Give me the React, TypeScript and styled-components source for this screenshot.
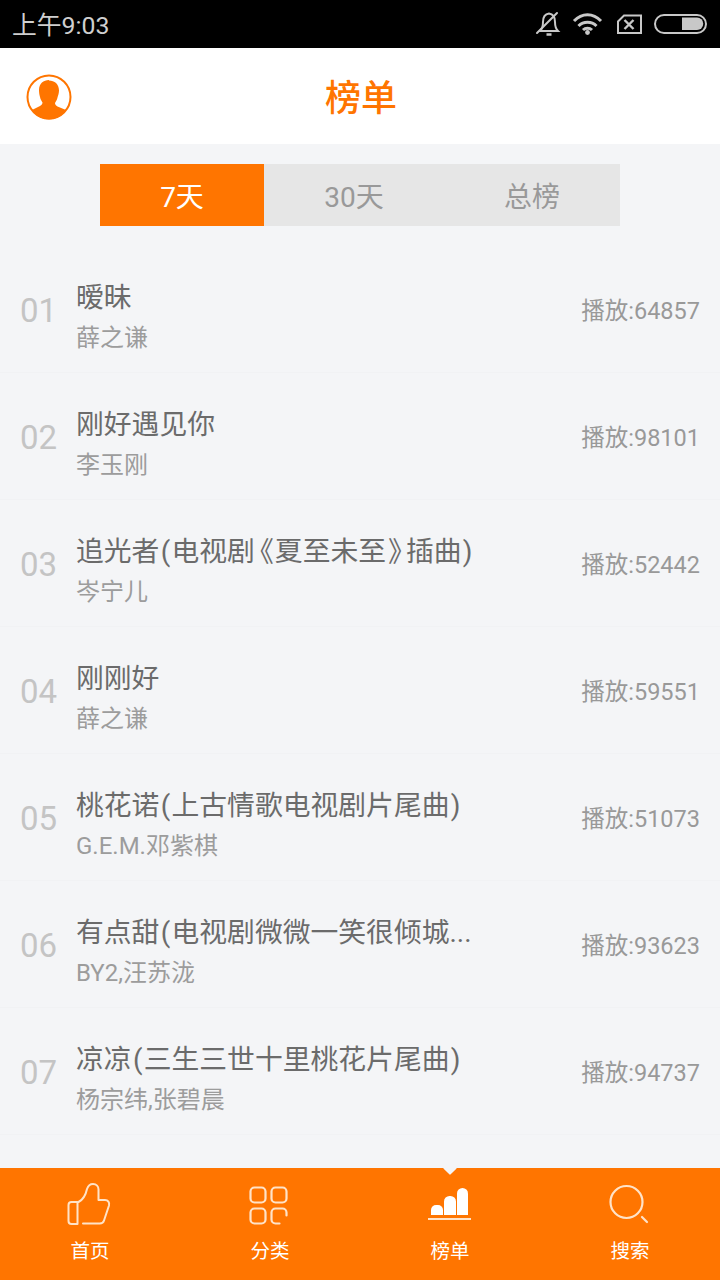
import React from "react";
import styled, { createGlobalStyle } from "styled-components";

const Global = createGlobalStyle`
  html, body { margin: 0; padding: 0; background: #f4f5f7; }
  body { font-family: Roboto, "Noto Sans CJK SC", sans-serif; }
  * { box-sizing: border-box; }
`;

const Screen = styled.div`
  width: 720px; height: 1280px; display: flex; flex-direction: column;
  background: #f4f5f7; overflow: hidden;
`;
const StatusBar = styled.div`
  height: 48px; background: #000; display: flex; align-items: center;
  justify-content: space-between; padding: 0 12px; flex: none;
`;
const Clock = styled.span`
  font-size: 24.8px; color: #cfcfcf; line-height: 48px; font-weight: 400; margin-top: 4px;
`;
const StatusIcons = styled.div`
  display: flex; align-items: center; height: 48px;
`;
const Header = styled.header`
  height: 96px; background: #fff; flex: none; display: flex; align-items: center;
  justify-content: center; position: relative;
`;
const Title = styled.h1`
  margin: 5px 0 0 2px; font-size: 36px; font-weight: 500; color: #ff7500; line-height: 48px;
`;
const Avatar = styled.div`
  position: absolute; left: 26px; top: 26px; width: 46px; height: 46px; display: flex;
`;
const Tabs = styled.div`
  margin: 20px 0 0 100px; width: 520px; height: 62px; display: flex; background: #e6e6e6; flex: none;
`;
const Tab = styled.div<{ $active?: boolean; $w: number }>`
  width: ${p => p.$w}px; height: 62px; display: flex; align-items: center; justify-content: center;
  font-size: 28px; padding-bottom: 1px; color: ${p => (p.$active ? "#fff" : "#999")};
  background: ${p => (p.$active ? "#ff7500" : "transparent")};
`;
const List = styled.div`
  margin-top: 20px; flex: 1; min-height: 0;
`;
const Row = styled.div`
  height: 127px; display: flex; align-items: center; padding: 0 20px;
  border-bottom: 1px solid #f1f2f4;
`;
const Rank = styled.div`
  width: 56px; font-size: 33px; color: #c4c4c4; flex: none; margin-top: 3px;
`;
const Info = styled.div`
  flex: 1; min-width: 0; display: flex; flex-direction: column; margin-top: 14px;
`;
const SongName = styled.div`
  font-size: 27.8px; color: #6b6b6b; line-height: 38px; white-space: nowrap;
`;
const Paren = styled.span`
  padding: 0 1.3px;
`;
const OpenQuote = styled.span`
  font-feature-settings: "halt";
  padding: 0 1px 0 5px;
`;
const CloseQuote = styled.span`
  font-feature-settings: "halt";
  padding: 0 4px 0 2px;
`;
const Artist = styled.div`
  font-size: 24px; color: #9c9c9c; line-height: 32px; margin-top: 5px; white-space: nowrap;
`;
const Plays = styled.div`
  font-size: 23.5px; color: #999; flex: none;
`;
const TabBar = styled.nav`
  height: 112px; background: #ff7500; flex: none; display: flex; position: relative;
`;
const NavItem = styled.div<{ $active?: boolean }>`
  width: 180px; display: flex; flex-direction: column; align-items: center; position: relative;
  padding-top: 14px;
  ${p => p.$active ? `&::before {
    content: ""; position: absolute; left: 85px; top: -5px; width: 10px; height: 10px;
    background: #f4f5f7; transform: rotate(45deg); border-radius: 1px;
  }` : ""}
`;
const NavIconBox = styled.div`
  height: 48px; width: 48px; display: flex;
`;
const NavLabel = styled.span`
  font-size: 19.5px; color: #fff; margin-top: 8px; line-height: 28px;
`;

const songs = [
  ["01", "暧昧", "薛之谦", "64857"],
  ["02", "刚好遇见你", "李玉刚", "98101"],
  ["03", "追光者(电视剧《夏至未至》插曲)", "岑宁儿", "52442"],
  ["04", "刚刚好", "薛之谦", "59551"],
  ["05", "桃花诺(上古情歌电视剧片尾曲)", "G.E.M.邓紫棋", "51073"],
  ["06", "有点甜(电视剧微微一笑很倾城...", "BY2,汪苏泷", "93623"],
  ["07", "凉凉(三生三世十里桃花片尾曲)", "杨宗纬,张碧晨", "94737"],
];

const renderName = (name: string) =>
  name.split(/([()《》])/).map((part, i) => {
    if (part === "(" || part === ")") return <Paren key={i}>{part}</Paren>;
    if (part === "《") return <OpenQuote key={i}>{part}</OpenQuote>;
    if (part === "》") return <CloseQuote key={i}>{part}</CloseQuote>;
    return part;
  });

const Thumb = () => (
  <svg width="48" height="48" viewBox="0 0 48 48" fill="none" stroke="#ffe3c8" strokeWidth="2" strokeLinecap="round" strokeLinejoin="round">
    <path d="M11.500 20H5.500a3 3 0 0 0-3 3v16a3 3 0 0 0 3 3h6V20z" />
    <path d="M12.500 20c4-2 7-6 8.500-13 1-3 3-5 6-5 3.500 0 5.500 2.500 5.500 5.500V18H39c3 0 4.800 2.500 4 5.500l-5 15c-.6 2-2.200 3-4.200 3H17" />
  </svg>
);
const Grid = () => (
  <svg width="48" height="48" viewBox="0 0 48 48" fill="none" stroke="#ffe3c8" strokeWidth="2.2" strokeLinecap="round">
    <rect x="4.500" y="5.500" width="15" height="15" rx="4" />
    <rect x="25.500" y="5.500" width="15" height="15" rx="4" />
    <rect x="4.500" y="26.500" width="15" height="15" rx="4" />
    <path d="M33.500 41.500h-4a4 4 0 0 1-4-4v-7a4 4 0 0 1 4-4h7a4 4 0 0 1 4 4v3" />
  </svg>
);
const Bars = () => (
  <svg width="48" height="48" viewBox="0 0 48 48">
    <path d="M5 33v-5a5 5 0 0 1 5-5h2a5 5 0 0 1 5 5V33z" fill="#fff" />
    <path d="M18 33V19.500a5.500 5.500 0 0 1 5.500-5.500h1a5.500 5.500 0 0 1 5.500 5.500V33z" fill="#fff" />
    <path d="M31 33V11.500a5.500 5.500 0 0 1 5.500-5.500a5.500 5.500 0 0 1 5.500 5.500V33z" fill="#fff" />
    <rect x="2" y="36" width="43" height="2" fill="#ffe3c8" />
  </svg>
);
const Search = () => (
  <svg width="48" height="48" viewBox="0 0 48 48" fill="none" stroke="#ffe3c8" strokeWidth="2.2" strokeLinecap="round">
    <circle cx="20.500" cy="20" r="16" />
    <path d="M36 35l5 5" />
  </svg>
);

export default function App() {
  return (
    <Screen>
      <Global />
      <StatusBar>
        <Clock>上午9:03</Clock>
        <StatusIcons>
          <svg width="196" height="48" viewBox="0 0 196 48" fill="none" stroke="#c8c8c8" strokeWidth="2">
            <path d="M28 31c2-2 3-4 3-9 0-5 2-8 6-8.500 4 .5 6 3.500 6 8.500 0 5 1 7 3 9z" />
            <path d="M25 33L45 13" strokeLinecap="round" />
            <path d="M34.500 34.500h5" strokeWidth="2.500" />
            <path d="M62 21c8-8.500 19-8.500 27 0" strokeWidth="3" />
            <path d="M66.500 26c5-5 13-5 18 0" strokeWidth="3" />
            <path d="M71 30c2.500-2.500 6.500-2.500 9 0" strokeWidth="3" />
            <circle cx="75.500" cy="32.500" r="2.400" fill="#c8c8c8" stroke="none" />
            <path d="M106 21.500L112 15.500H129V33H106z" />
            <path d="M112.500 20l9 9M121.500 20l-9 9" strokeWidth="2.400" />
            <rect x="143" y="15" width="51" height="18" rx="9" />
            <path d="M170 17.500H185a6.250 6.250 0 0 1 0 12.500H170z" fill="#c8c8c8" stroke="none" />
          </svg>
        </StatusIcons>
      </StatusBar>
      <Header>
        <Avatar>
          <svg width="46" height="46" viewBox="0 0 46 46">
            <circle cx="23" cy="23" r="21.500" fill="#fff" stroke="#ff7500" strokeWidth="2" />
            <path d="M23 6c-5.500 0-10 3.500-10 10 0 3 .5 5 1 7 .5 2.500 1.500 3.500 2.500 5.500 0 1.500-1 2.500-2.500 3.500L6 36c4 6 10 9.500 17 9.500S36 42 40 36l-8.500-3.500c-1.500-1-2.500-2-2.500-3.500 1-2 2-3 2.500-5.500.5-2 1.500-4 1.500-7 0-6.500-4.500-10-10-10z" fill="#ff7500" />
          </svg>
        </Avatar>
        <Title>榜单</Title>
      </Header>
      <Tabs>
        <Tab $active $w={164}>7天</Tab>
        <Tab $w={180}>30天</Tab>
        <Tab $w={176}>总榜</Tab>
      </Tabs>
      <List>
        {songs.map(([n, name, artist, plays]) => (
          <Row key={n}>
            <Rank>{n}</Rank>
            <Info>
              <SongName>{renderName(name)}</SongName>
              <Artist>{artist}</Artist>
            </Info>
            <Plays>播放:{plays}</Plays>
          </Row>
        ))}
      </List>
      <TabBar>
        <NavItem><NavIconBox><Thumb /></NavIconBox><NavLabel>首页</NavLabel></NavItem>
        <NavItem><NavIconBox><Grid /></NavIconBox><NavLabel>分类</NavLabel></NavItem>
        <NavItem $active><NavIconBox><Bars /></NavIconBox><NavLabel>榜单</NavLabel></NavItem>
        <NavItem><NavIconBox><Search /></NavIconBox><NavLabel>搜索</NavLabel></NavItem>
      </TabBar>
    </Screen>
  );
}
